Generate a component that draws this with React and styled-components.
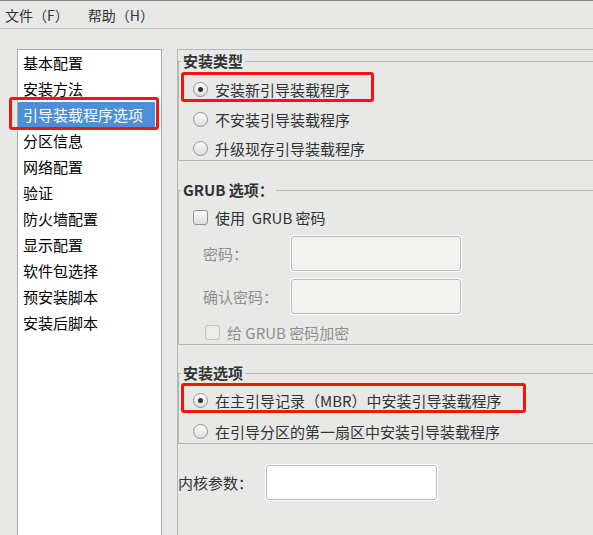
import styled, { createGlobalStyle } from "styled-components";

const GlobalStyle = createGlobalStyle`
  html, body {
    margin: 0;
    padding: 0;
  }
  body {
    background: #e8e8e7;
    font-family: "Noto Sans CJK SC", "DejaVu Sans", sans-serif;
    color: #2e3436;
  }
`;

const Window = styled.div`
  width: 593px;
  height: 535px;
  box-sizing: border-box;
  border-top: 1px solid #858580;
  display: flex;
  flex-direction: column;
  overflow: hidden;
`;

const MenuBar = styled.div`
  height: 27px;
  border-bottom: 1px solid #c9c9c7;
  display: flex;
  align-items: center;
  gap: 19px;
  padding-left: 5px;
  font-size: 14px;
  color: #2e3436;
`;

const MenuItem = styled.span`
  white-space: pre;
`;

const Body = styled.div`
  flex: 1;
  min-height: 0;
  display: flex;
  padding: 20px 0 0 17px;
`;

const NavList = styled.div`
  width: 145px;
  flex-shrink: 0;
  box-sizing: border-box;
  border: 1px solid #a9a9a9;
  border-bottom: none;
  background: #fff;
  padding-right: 6px;
`;

const NavItem = styled.div`
  position: relative;
  height: 26px;
  line-height: 26px;
  padding-left: 5px;
  font-size: 15px;
  color: ${(p) => (p.$active ? "#fff" : "#000")};
  background: ${(p) => (p.$active ? "#4a90d9" : "transparent")};

  ${(p) =>
    p.$marked &&
    `
    &::after {
      content: "";
      position: absolute;
      left: -9px;
      right: -4px;
      top: -5px;
      bottom: -2px;
      border: 3px solid #f3160c;
      border-radius: 3px;
    }
  `}
`;

const Panel = styled.div`
  flex: 1;
  margin-left: 15px;
  border-left: 1px solid #b6b6b4;
  border-top: 1px solid #b6b6b4;
  display: flex;
  flex-direction: column;
`;

const Group = styled.fieldset`
  margin: ${(p) => p.$gap}px 0 0;
  padding: 0 0 1px 0;
  border: 1px solid #b6b6b4;
  border-right: none;
  min-width: 0;
`;

const Legend = styled.legend`
  margin-left: 2px;
  padding: 0 2px;
  height: 20px;
  font-size: 15px;
  line-height: 20px;
  font-weight: bold;
  color: #2e3436;
`;

const OptionList = styled.div`
  display: flex;
  flex-direction: column;
  align-items: flex-start;
  gap: ${(p) => p.$gap || 8.5}px;
  padding: ${(p) => p.$top}px 0 0 14px;
`;

const Option = styled.label`
  position: relative;
  display: inline-flex;
  align-items: center;
  gap: 7px;
  height: 21px;
  line-height: 21px;
  padding-left: ${(p) => p.$indent || 0}px;
  font-size: 15px;
  white-space: pre;
  color: ${(p) => (p.$disabled ? "#8d8f8c" : "#2e3436")};

  ${(p) =>
    p.$marked &&
    `
    &::after {
      content: "";
      position: absolute;
      left: -12px;
      right: -24px;
      top: -7px;
      bottom: -2px;
      border: 3px solid #f3160c;
      border-radius: 3px;
    }
  `}
`;

const Radio = styled.span`
  position: relative;
  width: 15px;
  height: 15px;
  box-sizing: border-box;
  border-radius: 50%;
  border: 1px solid #929292;
  background: linear-gradient(#fdfdfd, #dcdcdb);
  flex-shrink: 0;

  ${(p) =>
    p.$checked &&
    `
    &::after {
      content: "";
      position: absolute;
      left: 4px;
      top: 4px;
      width: 5px;
      height: 5px;
      border-radius: 50%;
      background: #2e3436;
    }
  `}
`;

const Checkbox = styled.span`
  width: 15px;
  height: 15px;
  box-sizing: border-box;
  border-radius: 3px;
  border: 1px solid ${(p) => (p.$disabled ? "#c2c2c0" : "#929292")};
  background: ${(p) =>
    p.$disabled ? "#ecece9" : "linear-gradient(#fdfdfd, #dcdcdb)"};
  flex-shrink: 0;
`;

const FieldGrid = styled.div`
  display: grid;
  grid-template-columns: 88px 170px;
  row-gap: 8px;
  align-items: center;
  margin: 8px 0 8px;
  padding-left: 24px;
`;

const FieldLabel = styled.span`
  width: ${(p) => (p.$width ? `${p.$width}px` : "auto")};
  font-size: 15px;
  color: ${(p) => (p.$disabled ? "#8d8f8c" : "#2e3436")};
`;

const TextBox = styled.div`
  width: ${(p) => p.$width}px;
  height: 35px;
  box-sizing: border-box;
  border: 1px solid #b9b9b6;
  border-radius: 3px;
  background: ${(p) => (p.$disabled ? "#f2f2f0" : "#fff")};
  box-shadow: 0 0 0 1px #fff;
`;

const KernelRow = styled.div`
  display: flex;
  align-items: center;
  margin-top: 21px;
`;

const navItems = [
  "基本配置",
  "安装方法",
  "引导装载程序选项",
  "分区信息",
  "网络配置",
  "验证",
  "防火墙配置",
  "显示配置",
  "软件包选择",
  "预安装脚本",
  "安装后脚本",
];

export default function App() {
  return (
    <>
      <GlobalStyle />
      <Window>
        <MenuBar>
          <MenuItem>文件（F）</MenuItem>
          <MenuItem>帮助（H）</MenuItem>
        </MenuBar>
        <Body>
          <NavList>
            {navItems.map((item, i) => (
              <NavItem key={item} $active={i === 2} $marked={i === 2}>
                {item}
              </NavItem>
            ))}
          </NavList>
          <Panel>
            <Group $gap={1}>
              <Legend>安装类型</Legend>
              <OptionList $top={8}>
                <Option $marked>
                  <Radio $checked />
                  安装新引导装载程序
                </Option>
                <Option>
                  <Radio />
                  不安装引导装载程序
                </Option>
                <Option>
                  <Radio />
                  升级现存引导装载程序
                </Option>
              </OptionList>
            </Group>

            <Group $gap={19}>
              <Legend>GRUB 选项：</Legend>
              <OptionList $top={7}>
                <Option>
                  <Checkbox />
                  使用  GRUB 密码
                </Option>
              </OptionList>
              <FieldGrid>
                <FieldLabel $disabled>密码：</FieldLabel>
                <TextBox $width={170} $disabled />
                <FieldLabel $disabled>确认密码：</FieldLabel>
                <TextBox $width={170} $disabled />
              </FieldGrid>
              <OptionList $top={0}>
                <Option $disabled $indent={12}>
                  <Checkbox $disabled />
                  给 GRUB 密码加密
                </Option>
              </OptionList>
            </Group>

            <Group $gap={18}>
              <Legend>安装选项</Legend>
              <OptionList $top={7} $gap={9.5}>
                <Option $marked>
                  <Radio $checked />
                  在主引导记录（MBR）中安装引导装载程序
                </Option>
                <Option>
                  <Radio />
                  在引导分区的第一扇区中安装引导装载程序
                </Option>
              </OptionList>
            </Group>

            <KernelRow>
              <FieldLabel $width={88}>内核参数：</FieldLabel>
              <TextBox $width={171} />
            </KernelRow>
          </Panel>
        </Body>
      </Window>
    </>
  );
}
